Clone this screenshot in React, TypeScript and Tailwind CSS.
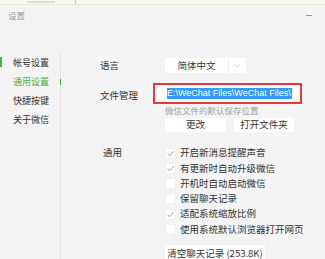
import React from 'react';

const font = { fontFamily: '"Noto Sans CJK SC", "Noto Sans", sans-serif' };

const navItems = ['帐号设置', '通用设置', '快捷按键', '关于微信'];

const options = [
  { label: '开启新消息提醒声音', checked: true },
  { label: '有更新时自动升级微信', checked: true },
  { label: '开机时自动启动微信', checked: false },
  { label: '保留聊天记录', checked: false },
  { label: '适配系统缩放比例', checked: true },
  { label: '使用系统默认浏览器打开网页', checked: false },
];

function CheckBox({ checked }: { checked: boolean }) {
  return (
    <span className="w-[11px] h-[11px] bg-white border border-[#f0f0f0] flex items-center justify-center shrink-0">
      {checked && (
        <svg width="9" height="9" viewBox="0 0 9 9">
          <path d="M1.5 4.8 L3.6 6.8 L7.6 2.2" fill="none" stroke="#7ec47e" strokeWidth="1" />
        </svg>
      )}
    </span>
  );
}

export default function App() {
  return (
    <div className="w-[325px] h-[259px] overflow-hidden bg-[#f4f4f4] text-[#333] flex flex-col" style={font}>
      {/* strip of the window behind */}
      <div className="h-[5px] bg-[#f9f9ee] border-b border-[#e6e6dc] flex shrink-0">
        <div className="ml-[27px] w-[28px] h-[2px] mt-[1px] bg-[#dcdcd0]" />
        <div className="ml-[20px] w-px h-full bg-[#c8c8c0]" />
      </div>

      {/* title bar */}
      <div className="h-[20px] flex items-center justify-between pl-[8px] pr-[13px] shrink-0">
        <span className="text-[8.5px] leading-none text-[#9a9a9a]">设置</span>
        <span className="w-[6px] h-px bg-[#9a9a9a]" />
      </div>

      <div className="flex flex-1 pt-[28px]">
        {/* sidebar */}
        <div className="w-[61px] border-r border-[#e4e4e4] relative shrink-0">
          <div className="absolute left-0 top-[4px] w-[2px] h-[10px] bg-[#4cb34c]" />
          {navItems.map((item, i) => (
            <div
              key={item}
              className={
                'h-[19px] flex items-center pl-[13px] text-[9px] leading-none whitespace-nowrap ' +
                (i === 1 ? 'text-[#45b045]' : 'text-[#333]')
              }
            >
              <span className="shrink-0">{item}</span>
              {i === 1 && <span className="ml-[11px] w-px h-[6px] bg-[#45b045] shrink-0" />}
            </div>
          ))}
        </div>

        {/* content */}
        <div className="flex-1 pl-[39px] text-[9.5px] leading-none">
          <div className="flex items-center h-[15px] mt-[5px]">
            <span className="w-[65px]">语言</span>
            <div className="flex h-[15px] bg-white">
              <span className="w-[63px] flex items-center justify-center">简体中文</span>
              <span className="w-[18px] border-l border-[#eeeeee] flex items-center justify-center">
                <svg width="7" height="5" viewBox="0 0 7 5">
                  <path d="M1 1.5 L3.5 3.8 L6 1.5" fill="none" stroke="#c4c4c4" strokeWidth="0.8" />
                </svg>
              </span>
            </div>
          </div>

          <div className="flex items-center mt-[10px]">
            <span className="w-[53px] pt-[4px]">文件管理</span>
            <div className="w-[149px] h-[21px] border-2 border-[#e8383d] bg-white flex items-center pl-[12px]">
              <span
                className="bg-[#3399ff] text-white text-[9px] leading-[11px] h-[11px] whitespace-nowrap pr-[1px]"
                style={{ fontFamily: '"Liberation Sans", sans-serif' }}
              >
                E:\WeChat Files\WeChat Files\
              </span>
            </div>
          </div>

          <div className="ml-[65px] mt-[1px] text-[8.5px] text-[#a0a0a0] h-[11px] flex items-center">
            微信文件的默认保存位置
          </div>

          <div className="ml-[65px] mt-[2px] flex gap-[8px]">
            <button className="w-[61px] h-[14px] bg-white flex items-center justify-center">更改</button>
            <button className="w-[60px] h-[14px] bg-white flex items-center justify-center">打开文件夹</button>
          </div>

          <div className="flex mt-[15px]">
            <span className="w-[65px] pl-[3px] h-[12px] flex items-center">通用</span>
            <div className="flex flex-col gap-[3.3px]">
              {options.map((o) => (
                <div key={o.label} className="flex items-center gap-[4px] h-[12px]">
                  <CheckBox checked={o.checked} />
                  <span>{o.label}</span>
                </div>
              ))}
            </div>
          </div>

          <button className="ml-[65px] mt-[10px] w-[100px] h-[16px] bg-white flex items-center justify-center whitespace-nowrap">
            清空聊天记录 (253.8K)
          </button>
        </div>
      </div>
    </div>
  );
}
